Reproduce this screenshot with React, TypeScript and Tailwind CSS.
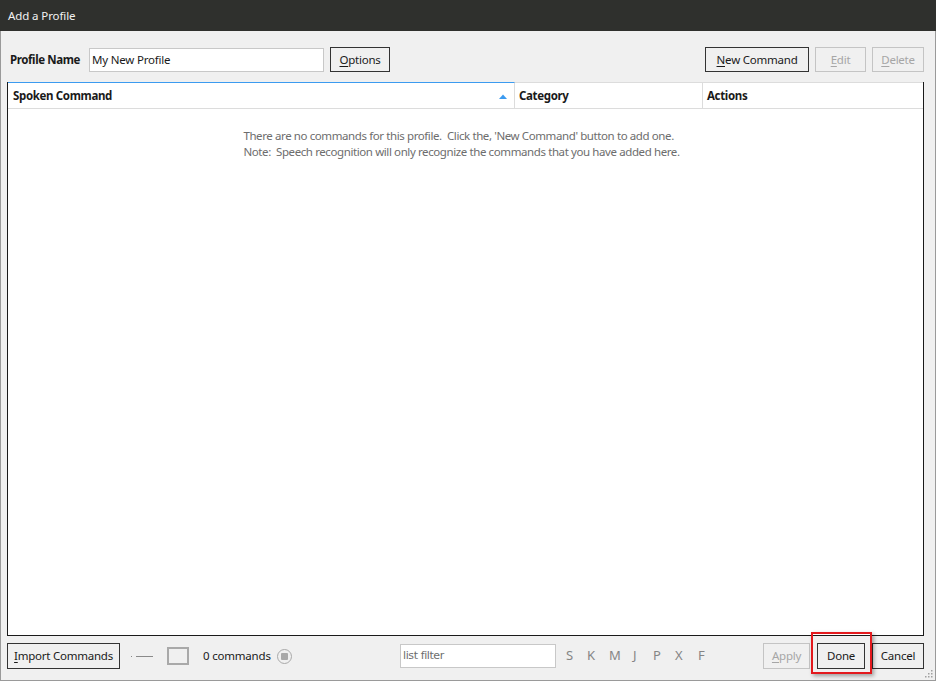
import React from 'react';

type BtnProps = {
  label: string;
  accessKey?: number;
  width: string;
  disabled?: boolean;
  height?: string;
};

// Windows-style push button with an underlined access key
function Btn({ label, accessKey, width, disabled, height = 'h-[25px]' }: BtnProps) {
  const chars = label.split('');
  return (
    <button
      className={`${width} ${height} flex items-center justify-center border text-[11.5px] leading-none tracking-[-0.25px] ${
        disabled ? 'border-[#c4c4c4] text-[#a6a6a6]' : 'border-[#333333] text-[#1a1a1a]'
      }`}
    >
      {chars.map((c, i) =>
        i === accessKey ? (
          <span key={i} className="underline underline-offset-2">
            {c}
          </span>
        ) : (
          <span key={i} className="whitespace-pre">
            {c}
          </span>
        )
      )}
    </button>
  );
}

const letters: [string, string][] = [
  ['S', 'w-[21px]'],
  ['K', 'w-[22px]'],
  ['M', 'w-[24px]'],
  ['J', 'w-[20px]'],
  ['P', 'w-[22px]'],
  ['X', 'w-[23px]'],
  ['F', 'w-[12px]'],
];

export default function App() {
  return (
    <div className="w-[936px] h-[681px] flex flex-col bg-[#f0f0f0] font-['Noto_Sans',sans-serif] text-[11.5px] text-[#1a1a1a] relative overflow-hidden">
      {/* title bar */}
      <div className="h-[31px] shrink-0 bg-[#2f302d] flex items-center pl-[8px] text-[#f2f2f2] tracking-[-0.1px]">
        Add a Profile
      </div>

      <div className="flex-1 flex flex-col border-x border-b border-[#9a9a9a] pl-[6px] pr-[11px]">
        {/* profile name row */}
        <div className="mt-[16px] h-[25px] flex items-center">
          <span className="w-[82px] pl-[3px] font-bold tracking-[-0.4px]">Profile Name</span>
          <div className="w-[235px] h-[24px] bg-white border border-[#c8c8c8] flex items-center pl-[2px] tracking-[-0.2px]">
            My New Profile
          </div>
          <div className="ml-[6px]">
            <Btn label="Options" accessKey={0} width="w-[60px]" />
          </div>
          <div className="flex-1" />
          <div className="flex gap-[6px]">
            <Btn label="New Command" accessKey={0} width="w-[104px]" />
            <Btn label="Edit" accessKey={0} width="w-[51px]" disabled />
            <Btn label="Delete" accessKey={0} width="w-[52px]" disabled />
          </div>
        </div>

        {/* command list */}
        <div className="mt-[10px] h-[554px] bg-white border-x border-b border-[#1a1a1a] flex flex-col">
          <div className="h-[27px] flex border-b border-[#dcdcdc] font-bold tracking-[-0.35px]">
            <div className="w-[507px] border-t border-[#3c9bf0] border-r border-r-[#dcdcdc] flex items-center pl-[5px] pr-[7px]">
              <span className="flex-1">Spoken Command</span>
              <svg width="8" height="5" viewBox="0 0 8 5" className="mt-[2px]">
                <path d="M0 5 L4 0.5 L8 5 Z" fill="#3c9bf0" />
              </svg>
            </div>
            <div className="w-[188px] border-t border-[#dcdcdc] border-r border-r-[#dcdcdc] flex items-center pl-[4px]">
              Category
            </div>
            <div className="flex-1 border-t border-[#dcdcdc] flex items-center pl-[4px]">Actions</div>
          </div>
          <div className="flex justify-center pt-[19px] pr-[8px]">
            <div className="text-[#6d6d6d] leading-[16px] tracking-[-0.4px] whitespace-pre">
              <div>There are no commands for this profile.  Click the, 'New Command' button to add one.</div>
              <div>Note:  Speech recognition will only recognize the commands that you have added here.</div>
            </div>
          </div>
        </div>

        {/* bottom bar */}
        <div className="mt-[7px] h-[26px] flex items-center">
          <Btn label="Import Commands" accessKey={0} width="w-[113px]" height="h-[26px]" />
          <div className="ml-[11px] flex items-center gap-[4px]">
            <div className="w-[1px] h-[1px] bg-[#8a8a8a]" />
            <div className="w-[17px] h-[1px] bg-[#8a8a8a]" />
          </div>
          <div className="ml-[14px] w-[22px] h-[18px] border-2 border-[#a9a9a9]" />
          <span className="ml-[14px] w-[65px] whitespace-nowrap tracking-[-0.2px]">0 commands</span>
          <div className="ml-[9px] w-[15px] h-[15px] rounded-full border border-[#a9a9a9] flex items-center justify-center">
            <div className="w-[7px] h-[7px] rounded-[1px] bg-[#a9a9a9]" />
          </div>
          <div className="ml-[108px] w-[156px] h-[24px] bg-white border border-[#c8c8c8] flex items-center pl-[2px] text-[11px] text-[#6d6d6d] font-['DejaVu_Sans',sans-serif] tracking-[-0.4px]">
            list filter
          </div>
          <div className="ml-[10px] flex text-[13px] text-[#858585]">
            {letters.map(([l, w]) => (
              <span key={l} className={w}>
                {l}
              </span>
            ))}
          </div>
          <div className="flex-1" />
          <div className="flex gap-[7px]">
            <Btn label="Apply" accessKey={0} width="w-[47px]" height="h-[26px]" disabled />
            <Btn label="Done" width="w-[48px]" height="h-[26px]" />
            <Btn label="Cancel" width="w-[52px]" height="h-[26px]" />
          </div>
        </div>
      </div>

      {/* red highlight around Done */}
      <div className="absolute left-[811px] top-[632px] w-[61px] h-[42px] border-2 border-[#e3191d] shadow-[2px_2px_4px_rgba(0,0,0,0.35)]" />

      {/* resize grip */}
      <svg width="9" height="9" viewBox="0 0 9 9" className="absolute right-[3px] bottom-[3px]">
        {[
          [7, 1],
          [7, 4],
          [4, 4],
          [7, 7],
          [4, 7],
          [1, 7],
        ].map(([x, y], i) => (
          <rect key={i} x={x} y={y} width="1.5" height="1.5" fill="#a0a0a0" />
        ))}
      </svg>
    </div>
  );
}
